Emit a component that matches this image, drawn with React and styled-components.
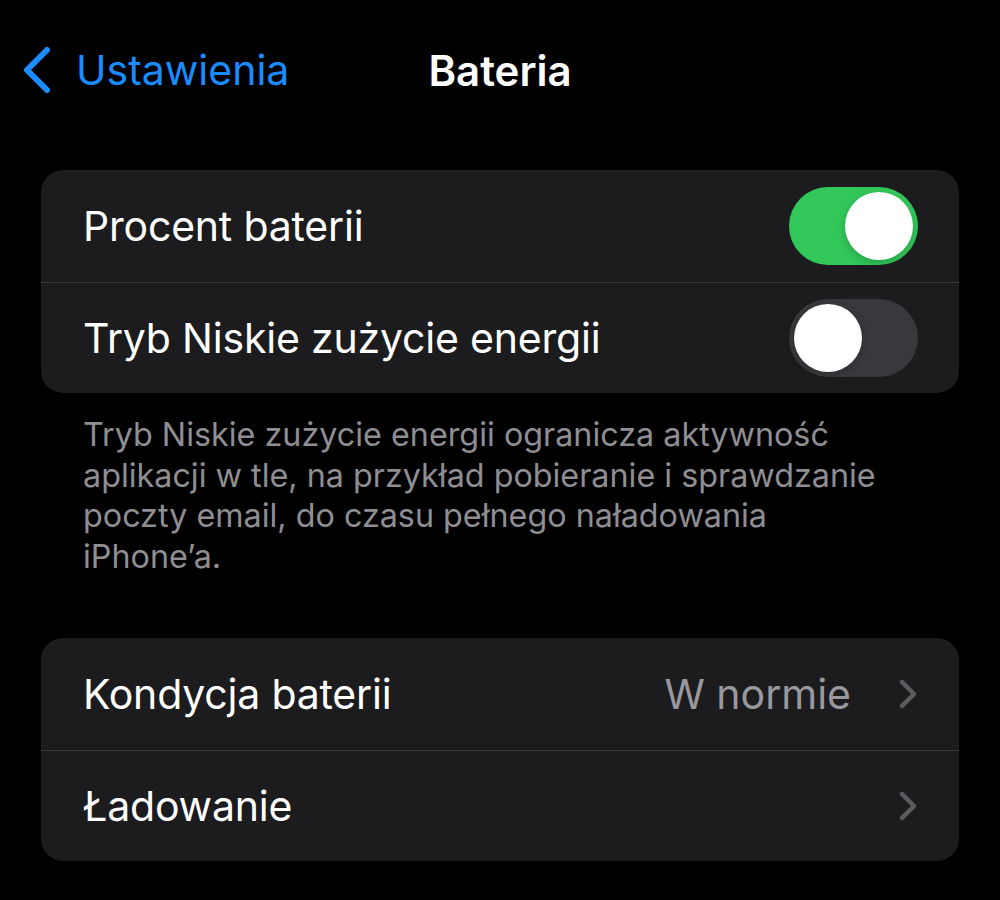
import React from "react";
import styled, { createGlobalStyle } from "styled-components";

const Global = createGlobalStyle`
  html, body { margin: 0; padding: 0; background: #000; }
  body { font-family: Inter, "Noto Sans", sans-serif; -webkit-font-smoothing: antialiased; }
`;

const Screen = styled.div`
  width: 1000px;
  height: 900px;
  background: #000;
  overflow: hidden;
  display: flex;
  flex-direction: column;
`;

const NavBar = styled.div`
  height: 140px;
  display: grid;
  grid-template-columns: 1fr auto 1fr;
  align-items: center;
  padding: 0 22px;
  box-sizing: border-box;
`;

const BackButton = styled.div`
  display: flex;
  align-items: center;
  gap: 24px;
  color: #1a8cff;
  font-size: 41px;
`;

const Title = styled.div`
  color: #fff;
  font-size: 42px;
  font-weight: 600;
`;

const Content = styled.div`
  padding: 30px 41px 0 41px;
  display: flex;
  flex-direction: column;
`;

const Group = styled.div`
  background: #1c1c1e;
  border-radius: 22px;
  overflow: hidden;
`;

const Row = styled.div`
  height: 111.5px;
  display: flex;
  align-items: center;
  padding: 0 41px 0 42px;
  box-sizing: border-box;
  & + & {
    border-top: 1.5px solid #38383a;
  }
`;

const Label = styled.div`
  flex: 1;
  color: #fff;
  font-size: 41px;
  letter-spacing: -0.2px;
`;

const Value = styled.div`
  color: #98989e;
  font-size: 41px;
  margin-right: 47px;
`;

const Switch = styled.div`
  width: 129px;
  height: 78px;
  border-radius: 39px;
  background: ${(p) => (p.$on ? "#32c759" : "#39393d")};
  display: flex;
  align-items: center;
  justify-content: ${(p) => (p.$on ? "flex-end" : "flex-start")};
  padding: 0 5px;
  box-sizing: border-box;
`;

const Knob = styled.div`
  width: 68px;
  height: 68px;
  border-radius: 50%;
  background: #fff;
  box-shadow: 0 3px 8px rgba(0, 0, 0, 0.2);
`;

const Footnote = styled.p`
  margin: 0;
  padding: 22px 70px 0 42px;
  height: 245px;
  box-sizing: border-box;
  color: #8e8e93;
  font-size: 32.3px;
  line-height: 40.5px;
`;

const BackChevron = () => (
  <svg width="30" height="46" viewBox="0 0 30 46" fill="none">
    <path d="M25 3 L5 23 L25 43" stroke="#1a8cff" strokeWidth="6" strokeLinecap="round" strokeLinejoin="round" />
  </svg>
);

const Chevron = () => (
  <svg width="20" height="32" viewBox="0 0 20 32" fill="none">
    <path d="M4 4 L16 16 L4 28" stroke="#5b5b60" strokeWidth="4.5" strokeLinecap="round" strokeLinejoin="round" />
  </svg>
);

export default function App() {
  return (
    <Screen>
      <Global />
      <NavBar>
        <BackButton>
          <BackChevron />
          <span>Ustawienia</span>
        </BackButton>
        <Title>Bateria</Title>
        <div />
      </NavBar>
      <Content>
        <Group>
          <Row>
            <Label>Procent baterii</Label>
            <Switch $on>
              <Knob />
            </Switch>
          </Row>
          <Row>
            <Label>Tryb Niskie zużycie energii</Label>
            <Switch>
              <Knob />
            </Switch>
          </Row>
        </Group>
        <Footnote>
          Tryb Niskie zużycie energii ogranicza aktywność aplikacji w tle, na przykład pobieranie i sprawdzanie poczty email, do czasu pełnego naładowania iPhone’a.
        </Footnote>
        <Group>
          <Row>
            <Label>Kondycja baterii</Label>
            <Value>W normie</Value>
            <Chevron />
          </Row>
          <Row>
            <Label>Ładowanie</Label>
            <Chevron />
          </Row>
        </Group>
      </Content>
    </Screen>
  );
}
